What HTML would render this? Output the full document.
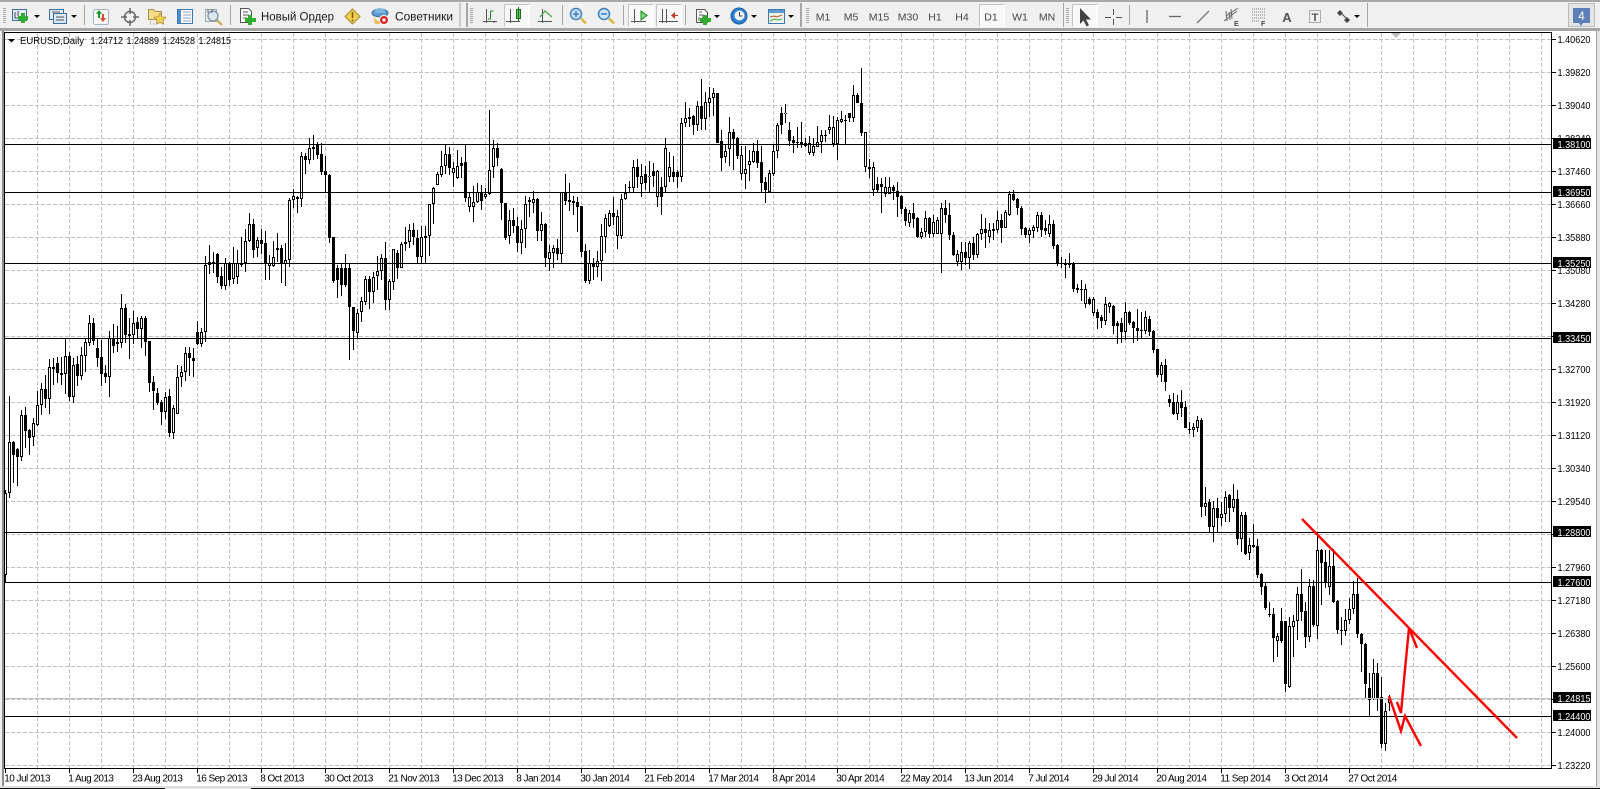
<!DOCTYPE html>
<html lang="ru"><head><meta charset="utf-8"><title>EURUSD,Daily</title>
<style>html,body{margin:0;padding:0;background:#fff;overflow:hidden}svg{display:block}text{font-family:"Liberation Sans","Noto Sans CJK SC",sans-serif}</style></head>
<body>
<svg xmlns="http://www.w3.org/2000/svg" width="1600" height="789" viewBox="0 0 1600 789">
<rect width="1600" height="789" fill="#fff"/>
<!-- toolbar -->
<rect width="1600" height="31" fill="#f0f0f0"/>
<rect width="1600" height="2" fill="#a8a8a8"/>
<rect y="28" width="1600" height="3" fill="#a5a5a5"/>
<rect x="0" y="31" width="4" height="758" fill="#f0f0f0"/>
<rect x="2" y="31" width="2" height="758" fill="#8c8c8c"/>
<rect x="1597" y="31" width="3" height="758" fill="#e4e4e4"/>
<rect x="1596" y="31" width="1" height="758" fill="#a0a0a0"/>
<rect y="786" width="1600" height="3" fill="#e0e0e0"/>
<path d="M0 788.5H165M251 788.5H1600" stroke="#111" stroke-width="1"/>
<!-- grips and separators -->
<g fill="none" stroke="#a8a8a8" stroke-dasharray="1 1" stroke-width="3"><path d="M4.500 8V24M471.500 8V24M807.500 8V24M1067.500 8V24"/></g>
<g stroke="#a6a6a6" fill="none"><path d="M84.500 5V25M230.500 5V25M562.500 5V25M623.500 5V25M685.500 5V25M1063.500 3V27M1129.500 5V25M1367.500 3V27M460 3V27"/></g>
<path d="M467 3V27M801 3V27" stroke="#a6a6a6" stroke-width="2"/>
<!-- pressed buttons -->
<g fill="#f9f9f9" stroke="#c4c4c4"><rect x="504.500" y="4.500" width="25" height="22"/><rect x="628.500" y="4.500" width="25" height="22"/><rect x="656.500" y="4.500" width="25" height="22"/><rect x="979.500" y="4.500" width="25" height="22"/><rect x="1072.500" y="4.500" width="25" height="22"/></g>
<g fill="none" stroke="#fff"><path d="M529.500 4.500V26.500H504.500M653.500 4.500V26.500H628.500M681.500 4.500V26.500H656.500M1004.500 4.500V26.500H979.500M1097.500 4.500V26.500H1072.500"/></g>
<!-- dropdown arrows -->
<path d="M34 15h6l-3 3zM71 15h6l-3 3zM714 15h6l-3 3zM751 15h6l-3 3zM788 15h6l-3 3zM1354 15h6l-3 3z" fill="#111"/>
<!-- new chart -->
<rect x="12.500" y="9.500" width="14" height="11" fill="#e4eef8" stroke="#3b6ea5"/><path d="M15 12v6h9M18 11v5" stroke="#444" fill="none"/>
<path d="M23 13v10M18 18h10" stroke="#2fae2f" stroke-width="4"/>
<!-- profiles -->
<rect x="49.500" y="9.500" width="14" height="10" fill="#e4eef8" stroke="#3b6ea5"/><rect x="53.500" y="13.500" width="13" height="10" fill="#dce8f5" stroke="#3b6ea5"/><path d="M52 12h8M56 17h8M56 20h8" stroke="#555" fill="none"/>
<!-- market watch -->
<rect x="93.500" y="9.500" width="15" height="15" rx="2" fill="#f8f8f8" stroke="#9fb2c6"/><path d="M99 10l-3 4h2v4h2v-4h2z" fill="#1c9a2c"/><path d="M103 22l3-4h-2v-4h-2v4h-2z" fill="#d44a2a"/>
<!-- navigator -->
<circle cx="130" cy="17" r="5.500" fill="none" stroke="#666" stroke-width="1.500"/><path d="M130 8v6M130 20v6M121 17h6M133 17h6" stroke="#666" stroke-width="1.500"/>
<!-- folder star -->
<path d="M148.500 9.500h5l2 2h6v8h-13z" fill="#f6dd8a" stroke="#a89048"/><path d="M160 13l1.800 3.700 4.200.6-3 2.900.7 4.100-3.700-1.900-3.700 1.900.7-4.100-3-2.900 4.200-.6z" fill="#f0cf50" stroke="#a88a30" stroke-width=".7"/>
<path d="M150 22h1M150 24h1M153 24h1" stroke="#888"/>
<!-- terminal -->
<rect x="177.500" y="9.500" width="15" height="14" fill="#fff" stroke="#3b78b5"/><rect x="178" y="10" width="3" height="13" fill="#4a8ccc"/><path d="M183 12h8M183 15h8M183 18h8M183 21h8" stroke="#8aa0b8"/>
<!-- tester -->
<rect x="205.500" y="9.500" width="11" height="12" fill="#e8eef4" stroke="#9aa8b4"/><circle cx="213" cy="16" r="5" fill="#dbe8f2" stroke="#7e8e9c" stroke-width="1.300"/><path d="M217 20l5 5" stroke="#c8a848" stroke-width="2"/><path d="M208 9v4M212 9v4" stroke="#667"/>
<!-- new order -->
<path d="M240.500 8.500h8l3 3v11h-11z" fill="#fff" stroke="#555"/><path d="M243 12h5M243 15h6M243 18h4" stroke="#555"/><path d="M250 15v10M245 20h11" stroke="#2fae2f" stroke-width="4"/>
<text x="261" y="20.500" font-size="11.500" fill="#1a1a1a" textLength="73" lengthAdjust="spacingAndGlyphs">Новый Ордер</text>
<!-- alert -->
<path d="M352.500 9l7.500 7.500-7.500 7.500-7.500-7.500z" fill="#f6cf4e" stroke="#a88a30"/><path d="M352.500 12v6M352.500 19.500v2" stroke="#7a5a10" stroke-width="1.600"/>
<!-- advisors -->
<ellipse cx="380" cy="13" rx="8" ry="4" fill="#5a9ad0" stroke="#3a70a0"/><path d="M375 10q5-4 10 0v3h-10z" fill="#7fb6e0"/><path d="M373 16q6 9 13 3v5h-11z" fill="#f0c060"/><circle cx="384" cy="20" r="4.500" fill="#d82020" stroke="#fff"/><rect x="382.500" y="18.500" width="3" height="3" fill="#fff"/>
<text x="395" y="20.500" font-size="11.500" fill="#1a1a1a" textLength="58" lengthAdjust="spacingAndGlyphs">Советники</text>
<!-- chart type icons -->
<g fill="none" stroke="#555"><path d="M486.500 9v14M483 21.500h14M494 23v-1"/><path d="M510.500 9v14M506 21.500h14"/><path d="M542.500 9v14M538 21.500h14"/><path d="M634.500 9v14M631 21.500h15"/><path d="M662.500 9v14M666.500 9v14M659 21.500h19"/></g>
<path d="M490.500 11v8M490.500 11h3M488 19h3" stroke="#1c8a1c" fill="none"/>
<rect x="516.500" y="9.500" width="4" height="9" fill="#5fd05f" stroke="#1c6a1c"/><path d="M518.500 7v14" stroke="#1c6a1c"/>
<path d="M540 17l5-6 7 6" fill="none" stroke="#4aa84a" stroke-width="1.300"/>
<path d="M641 11l6 4.500-6 4.500z" fill="#7fd07f" stroke="#1c8a1c"/>
<path d="M675 12l-4 3.500 4 3.500z" fill="#c43a1a"/><path d="M675 15.500h3" stroke="#c43a1a"/>
<!-- zoom -->
<circle cx="576" cy="14" r="5.500" fill="#cfe4f6" stroke="#3c82c0" stroke-width="1.500"/><path d="M573 14h6M576 11v6" stroke="#3c82c0" stroke-width="1.500"/><path d="M581 18.500l5 5" stroke="#d8b840" stroke-width="2.500"/>
<circle cx="604" cy="14" r="5.500" fill="#cfe4f6" stroke="#3c82c0" stroke-width="1.500"/><path d="M601 14h6" stroke="#3c82c0" stroke-width="1.500"/><path d="M609 18.500l5 5" stroke="#d8b840" stroke-width="2.500"/>
<!-- indicators -->
<path d="M696.500 9.500h8l3 3v10h-11z" fill="#fff" stroke="#555"/><path d="M699 12h3M699 15h4v4M699 17v4" stroke="#555" fill="none"/><path d="M705 15v10M700 20h11" stroke="#2fae2f" stroke-width="4"/>
<!-- clock -->
<circle cx="739" cy="16" r="8" fill="#2f7fd0" stroke="#1c5a9c"/><circle cx="739.500" cy="15.500" r="5" fill="#eef2f6"/><path d="M739.500 12v4h3" stroke="#444" fill="none"/>
<!-- template -->
<rect x="768.500" y="9.500" width="16" height="14" fill="#eef4e8" stroke="#3c78b0"/><rect x="769" y="10" width="15" height="3" fill="#5a9ad0"/><path d="M770 17l4-1 3 1 5-2" stroke="#c05030" fill="none"/><path d="M770 21l4-2 3 1 5-1" stroke="#3ca83c" fill="none"/>
<!-- timeframes -->
<g font-size="10.500" fill="#444" text-anchor="middle"><text x="823" y="20.500">M1</text><text x="851" y="20.500">M5</text><text x="879" y="20.500">M15</text><text x="908" y="20.500">M30</text><text x="935" y="20.500">H1</text><text x="962" y="20.500">H4</text><text x="991" y="20.500">D1</text><text x="1020" y="20.500">W1</text><text x="1047" y="20.500">MN</text></g>
<!-- drawing tools -->
<path d="M1080 8v16l3.500-3.500 3 6 2.500-1.200-3-5.800h5z" fill="#444"/>
<path d="M1113.500 9v6M1113.500 19v6M1105 17.500h6M1116 17.500h6" stroke="#555" fill="none"/>
<path d="M1147 10v13" stroke="#666" stroke-width="1.300"/><path d="M1169 16.500h12" stroke="#666" stroke-width="1.300"/><path d="M1197 23l12-12" stroke="#777" stroke-width="1.300"/>
<path d="M1224 21l13-10M1226 16l12-8M1226 11l1 10M1231 9l1 10M1229 12l1 8" stroke="#666" fill="none"/><text x="1234" y="26" font-size="7" font-weight="bold" fill="#444">E</text>
<path d="M1252 9h13M1252 12h13M1252 15h13M1252 18h13M1252 21h8" stroke="#777" stroke-dasharray="1 1"/><text x="1261" y="26" font-size="7" font-weight="bold" fill="#444">F</text>
<text x="1287" y="22" font-size="13" font-weight="bold" fill="#555" text-anchor="middle">A</text>
<rect x="1309.500" y="10.500" width="11" height="12" fill="none" stroke="#666" stroke-dasharray="1 1"/><text x="1315" y="21" font-size="11" font-weight="bold" fill="#555" text-anchor="middle">T</text>
<path d="M1340 10l3 3-3 3-3-3zM1347 17l3 3-3 3-3-3z" fill="#444"/><path d="M1342 14l4 4" stroke="#444"/>
<!-- notification button -->
<rect x="1568.500" y="3.500" width="26" height="23" fill="#e4e4e4" stroke="#bcbcbc"/>
<path d="M1573 8h17v15h-7l-2 3-2-3h-6z" fill="#5c7fb8"/><text x="1581.500" y="20" font-size="11.500" fill="#fff" text-anchor="middle">4</text>
<!-- grid -->
<g fill="none" stroke="#c0c0c0" stroke-dasharray="4 2">
<path d="M5 39.500H1551M5 72.500H1551M5 105.500H1551M5 138.500H1551M5 171.500H1551M5 204.500H1551M5 237.500H1551M5 270.500H1551M5 303.500H1551M5 336.500H1551M5 369.500H1551M5 402.500H1551M5 435.500H1551M5 468.500H1551M5 501.500H1551M5 534.500H1551M5 567.500H1551M5 600.500H1551M5 633.500H1551M5 666.500H1551M5 699.500H1551M5 732.500H1551M5 765.500H1551"/>
<path d="M37.500 33V768M69.500 33V768M101.500 33V768M133.500 33V768M165.500 33V768M197.500 33V768M229.500 33V768M261.500 33V768M293.500 33V768M325.500 33V768M357.500 33V768M389.500 33V768M421.500 33V768M453.500 33V768M485.500 33V768M517.500 33V768M549.500 33V768M581.500 33V768M613.500 33V768M645.500 33V768M677.500 33V768M709.500 33V768M741.500 33V768M773.500 33V768M805.500 33V768M837.500 33V768M869.500 33V768M901.500 33V768M933.500 33V768M965.500 33V768M997.500 33V768M1029.500 33V768M1061.500 33V768M1093.500 33V768M1125.500 33V768M1157.500 33V768M1189.500 33V768M1221.500 33V768M1253.500 33V768M1285.500 33V768M1317.500 33V768M1349.500 33V768M1381.500 33V768M1413.500 33V768M1445.500 33V768M1477.500 33V768M1509.500 33V768M1541.500 33V768"/>
</g>
<!-- wicks -->
<path fill="none" stroke="#000" stroke-width="1" d="M5.500 490V582M9.500 396V498M13.500 441V483M17.500 448V486M21.500 410V461M25.500 407V448M29.500 429V455M33.500 418V446M37.500 391V426M41.500 383V415M45.500 375V408M49.500 359V414M53.500 358V385M57.500 357V383M61.500 357V385M65.500 338V394M69.500 352V401M73.500 358V403M77.500 356V386M81.500 347V380M85.500 338V372M89.500 315V346M93.500 318V345M97.500 338V367M101.500 340V386M105.500 365V383M109.500 331V397M113.500 324V353M117.500 326V352M121.500 294V348M125.500 304V343M129.500 318V359M133.500 311V344M137.500 317V338M141.500 316V348M145.500 316V356M149.500 341V392M153.500 376V410M157.500 388V405M161.500 400V425M165.500 392V419M169.500 389V437M173.500 405V439M177.500 365V414M181.500 366V387M185.500 347V381M189.500 347V376M193.500 348V377M197.500 321V345M201.500 328V347M205.500 256V342M209.500 245V274M213.500 252V273M217.500 253V283M221.500 267V289M225.500 258V290M229.500 262V286M233.500 247V284M237.500 250V284M241.500 237V267M245.500 229V272M249.500 213V242M253.500 219V258M257.500 237V257M261.500 229V254M265.500 231V280M269.500 255V280M273.500 241V267M277.500 233V262M281.500 245V283M285.500 243V286M289.500 198V267M293.500 189V208M297.500 196V213M301.500 152V207M305.500 153V174M309.500 138V164M313.500 135V160M317.500 142V159M321.500 143V175M325.500 156V192M329.500 174V243M333.500 237V283M337.500 265V298M341.500 264V296M345.500 254V287M349.500 263V360M353.500 307V350M357.500 309V338M361.500 297V322M365.500 276V305M369.500 276V309M373.500 272V303M377.500 256V290M381.500 254V280M385.500 242V310M389.500 279V310M393.500 249V290M397.500 250V279M401.500 242V268M405.500 227V251M409.500 224V248M413.500 223V245M417.500 230V263M421.500 226V263M425.500 226V263M429.500 204V256M433.500 187V224M437.500 172V185M441.500 151V177M445.500 145V174M449.500 147V175M453.500 162V187M457.500 150V179M461.500 157V178M465.500 145V202M469.500 193V212M473.500 186V222M477.500 183V203M481.500 185V210M485.500 188V199M489.500 110V195M493.500 140V178M497.500 143V166M501.500 168V220M505.500 203V240M509.500 210V244M513.500 208V233M517.500 217V252M521.500 220V254M525.500 196V248M529.500 197V217M533.500 191V213M537.500 198V241M541.500 212V241M545.500 223V267M549.500 245V271M553.500 245V268M557.500 239V260M561.500 192V263M565.500 174V205M569.500 183V211M573.500 196V215M577.500 197V232M581.500 206V257M585.500 244V283M589.500 250V284M593.500 258V280M597.500 251V277M601.500 224V281M605.500 214V253M609.500 210V227M613.500 197V225M617.500 210V249M621.500 194V239M625.500 184V200M629.500 181V192M633.500 160V192M637.500 159V188M641.500 164V197M645.500 166V190M649.500 161V192M653.500 163V187M657.500 170V207M661.500 177V215M665.500 138V193M669.500 152V182M673.500 156V182M677.500 170V188M681.500 118V182M685.500 102V127M689.500 108V127M693.500 115V135M697.500 101V131M701.500 79V130M705.500 92V130M709.500 87V117M713.500 88V116M717.500 93V143M721.500 130V171M725.500 145V163M729.500 117V166M733.500 129V170M737.500 137V159M741.500 146V180M745.500 146V189M749.500 150V181M753.500 143V163M757.500 140V168M761.500 146V193M765.500 177V203M769.500 170V192M773.500 145V176M777.500 123V158M781.500 107V134M785.500 104V123M789.500 122V146M793.500 136V153M797.500 127V148M801.500 122V148M805.500 138V147M809.500 136V155M813.500 138V156M817.500 126V147M821.500 130V153M825.500 130V142M829.500 115V134M833.500 116V147M837.500 117V160M841.500 111V123M845.500 115V144M849.500 113V122M853.500 85V122M857.500 93V103M861.500 68V136M865.500 132V172M869.500 159V178M873.500 162V196M877.500 177V193M881.500 178V213M885.500 177V197M889.500 177V194M893.500 185V200M897.500 182V217M901.500 195V214M905.500 207V226M909.500 210V227M913.500 203V228M917.500 217V238M921.500 228V239M925.500 211V237M929.500 217V238M933.500 215V237M937.500 217V234M941.500 203V273M945.500 200V223M949.500 203V240M953.500 232V256M957.500 250V266M961.500 242V270M965.500 242V265M969.500 241V269M973.500 237V260M977.500 233V258M981.500 214V240M985.500 218V248M989.500 223V243M993.500 223V240M997.500 211V233M1001.500 214V243M1005.500 210V228M1009.500 191V216M1013.500 190V201M1017.500 198V215M1021.500 206V235M1025.500 227V238M1029.500 228V243M1033.500 225V238M1037.500 212V232M1041.500 212V237M1045.500 220V235M1049.500 215V237M1053.500 220V249M1057.500 244V266M1061.500 257V268M1065.500 259V278M1069.500 253V268M1073.500 262V292M1077.500 284V293M1081.500 280V301M1085.500 284V308M1089.500 297V305M1093.500 297V316M1097.500 309V329M1101.500 315V328M1105.500 297V325M1109.500 302V313M1113.500 305V334M1117.500 321V344M1121.500 318V343M1125.500 302V340M1129.500 311V325M1133.500 321V343M1137.500 309V341M1141.500 312V338M1145.500 311V334M1149.500 316V336M1153.500 330V353M1157.500 349V377M1161.500 362V382M1165.500 359V391M1169.500 395V407M1173.500 393V415M1177.500 395V420M1181.500 390V417M1185.500 401V428M1189.500 422V434M1193.500 423V437M1197.500 416V432M1201.500 418V517M1205.500 487V516M1209.500 499V532M1213.500 501V542M1217.500 498V533M1221.500 502V526M1225.500 491V522M1229.500 494V522M1233.500 484V512M1237.500 490V545M1241.500 512V552M1245.500 512V555M1249.500 538V560M1253.500 524V548M1257.500 539V578M1261.500 573V595M1265.500 583V610M1269.500 602V617M1273.500 608V662M1277.500 633V657M1281.500 608V643M1285.500 621V692M1289.500 617V688M1293.500 615V657M1297.500 587V640M1301.500 569V621M1305.500 602V648M1309.500 579V642M1313.500 580V627M1317.500 532V639M1321.500 549V605M1325.500 550V588M1329.500 550V595M1333.500 549V603M1337.500 600V634M1341.500 617V645M1345.500 609V636M1349.500 598V624M1353.500 581V614M1357.500 578V638M1361.500 633V672M1365.500 643V698M1369.500 673V716M1373.500 659V700M1377.500 663V711M1381.500 677V748M1385.500 703V751M1389.500 695V711"/>
<!-- bodies -->
<path fill="none" stroke="#000" stroke-width="3" d="M5.500 493V575M9.500 442V493M13.500 442V455M17.500 449V457M21.500 415V457M25.500 415V431M29.500 430V438M33.500 423V437M37.500 405V425M41.500 389V405M45.500 389V399M49.500 367V399M53.500 367V369M57.500 363V373M61.500 373V375M65.500 356V374M69.500 356V397M73.500 365V397M77.500 364V376M81.500 355V376M85.500 342V356M89.500 323V343M93.500 323V341M97.500 348V358M101.500 357V374M105.500 373V377M109.500 338V377M113.500 338V346M117.500 342V344M121.500 308V343M125.500 308V335M129.500 334V336M133.500 323V335M137.500 322V329M141.500 318V329M145.500 318V342M149.500 341V383M153.500 382V391M157.500 393V403M161.500 402V412M165.500 397V412M169.500 396V433M173.500 408V433M177.500 377V414M181.500 372V377M185.500 353V372M189.500 353V358M193.500 358V361M197.500 332V344M201.500 332V344M205.500 265V332M209.500 262V265M213.500 262V264M217.500 254V277M221.500 276V286M225.500 263V286M229.500 263V280M233.500 263V279M237.500 263V277M241.500 263V265M245.500 241V263M249.500 224V241M253.500 224V250M257.500 240V248M261.500 240V244M265.500 243V264M269.500 263V266M273.500 257V266M277.500 248V250M281.500 248V264M285.500 260V264M289.500 200V260M293.500 196V200M297.500 197V199M301.500 156V199M305.500 156V160M309.500 148V160M313.500 147V149M317.500 144V155M321.500 154V172M325.500 171V175M329.500 175V238M333.500 237V281M337.500 268V280M341.500 268V285M345.500 268V285M349.500 268V307M353.500 307V331M357.500 313V333M361.500 301V312M365.500 279V302M369.500 279V292M373.500 277V292M377.500 271V276M381.500 258V271M385.500 258V300M389.500 281V300M393.500 249V282M397.500 253V268M401.500 244V268M405.500 242V244M409.500 230V242M413.500 230V237M417.500 238V257M421.500 237V257M425.500 236V238M429.500 204V236M433.500 188V204M437.500 174V185M441.500 166V175M445.500 154V166M449.500 154V168M453.500 168V173M457.500 166V178M461.500 163V166M465.500 162V198M469.500 197V207M473.500 202V207M477.500 192V202M481.500 193V201M485.500 194V197M489.500 170V194M493.500 148V167M497.500 148V158M501.500 169V203M505.500 203V238M509.500 220V236M513.500 220V226M517.500 226V243M521.500 229V243M525.500 204V229M529.500 200V202M533.500 199V203M537.500 199V231M541.500 224V231M545.500 224V258M549.500 252V259M553.500 248V253M557.500 248V254M561.500 192V254M565.500 192V201M569.500 200V202M573.500 201V203M577.500 202V207M581.500 206V252M585.500 251V281M589.500 263V281M593.500 264V267M597.500 261V267M601.500 236V261M605.500 218V237M609.500 213V226M613.500 213V217M617.500 216V236M621.500 199V236M625.500 193V199M629.500 187V188M633.500 167V188M637.500 167V177M641.500 176V184M645.500 174V183M649.500 176V177M653.500 171V176M657.500 171V197M661.500 187V197M665.500 148V187M669.500 167V177M673.500 172V177M677.500 172V177M681.500 123V177M685.500 118V123M689.500 117V119M693.500 116V125M697.500 106V125M701.500 106V119M705.500 102V119M709.500 98V103M713.500 93V98M717.500 93V143M721.500 141V158M725.500 151V157M729.500 132V149M733.500 132V139M737.500 138V156M741.500 155V174M745.500 169V174M749.500 161V165M753.500 151V162M757.500 151V163M761.500 162V183M765.500 182V190M769.500 173V192M773.500 151V174M777.500 125V151M781.500 113V125M785.500 113V114M789.500 130V141M793.500 140V143M797.500 142V143M801.500 142V144M805.500 143V146M809.500 143V153M813.500 146V153M817.500 142V147M821.500 135V142M825.500 135V136M829.500 127V130M833.500 127V144M837.500 120V144M841.500 119V122M845.500 120V121M849.500 113V118M853.500 95V118M857.500 95V103M861.500 103V133M865.500 132V167M869.500 167V169M873.500 167V190M877.500 184V190M881.500 184V187M885.500 187V194M889.500 187V194M893.500 187V191M897.500 191V197M901.500 196V209M905.500 209V221M909.500 213V223M913.500 213V219M917.500 218V237M921.500 232V237M925.500 218V232M929.500 218V234M933.500 222V234M937.500 220V234M941.500 208V234M945.500 208V215M949.500 215V235M953.500 235V255M957.500 254V262M961.500 252V262M965.500 252V258M969.500 243V258M973.500 243V255M977.500 234V255M981.500 229V234M985.500 229V233M989.500 230V237M993.500 229V231M997.500 220V230M1001.500 220V228M1005.500 212V228M1009.500 194V215M1013.500 194V200M1017.500 199V208M1021.500 208V229M1025.500 228V235M1029.500 230V235M1033.500 227V231M1037.500 215V228M1041.500 215V230M1045.500 228V231M1049.500 224V234M1053.500 224V246M1057.500 245V263M1061.500 263V264M1065.500 264V265M1069.500 263V265M1073.500 263V289M1077.500 288V290M1081.500 289V290M1085.500 289V304M1089.500 299V304M1093.500 299V313M1097.500 312V318M1101.500 317V321M1105.500 304V321M1109.500 303V307M1113.500 306V326M1117.500 323V326M1121.500 323V332M1125.500 312V332M1129.500 312V323M1133.500 322V328M1137.500 328V331M1141.500 330V331M1145.500 317V331M1149.500 319V332M1153.500 331V350M1157.500 349V375M1161.500 365V375M1165.500 365V382M1169.500 399V403M1173.500 402V414M1177.500 402V414M1181.500 402V408M1185.500 407V428M1189.500 429V430M1193.500 427V430M1197.500 420V428M1201.500 420V507M1205.500 503V507M1209.500 502V527M1213.500 508V527M1217.500 508V518M1221.500 514V518M1225.500 497V514M1229.500 495V508M1233.500 499V508M1237.500 499V539M1241.500 515V539M1245.500 515V554M1249.500 545V553M1253.500 545V547M1257.500 546V575M1261.500 574V587M1265.500 586V608M1269.500 614V615M1273.500 614V638M1277.500 636V641M1281.500 621V641M1285.500 621V684M1289.500 626V687M1293.500 621V627M1297.500 594V621M1301.500 594V612M1305.500 611V637M1309.500 586V637M1313.500 586V625M1317.500 550V626M1321.500 550V563M1325.500 562V582M1329.500 566V587M1333.500 566V602M1337.500 601V630M1341.500 630V631M1345.500 620V631M1349.500 609V620M1353.500 594V609M1357.500 594V634M1361.500 634V644M1365.500 644V684M1369.500 688V700M1373.500 673V699M1377.500 673V698M1381.500 697V744M1385.500 711V744M1389.500 699V703"/>
<!-- white interiors -->
<path fill="none" stroke="#fff" stroke-width="1" d="M5.500 494V574M9.500 443V492M21.500 416V456M33.500 424V436M37.500 406V424M41.500 390V404M49.500 368V398M65.500 357V373M73.500 366V396M81.500 356V375M85.500 343V355M89.500 324V342M109.500 339V376M121.500 309V342M133.500 324V334M141.500 319V328M165.500 398V411M173.500 409V432M177.500 378V413M181.500 373V376M185.500 354V371M201.500 333V343M205.500 266V331M209.500 263V264M225.500 264V285M233.500 264V278M237.500 264V276M245.500 242V262M249.500 225V240M257.500 241V247M269.500 264V265M273.500 258V265M285.500 261V263M289.500 201V259M293.500 197V199M301.500 157V198M309.500 149V159M357.500 314V332M361.500 302V311M365.500 280V301M373.500 278V291M377.500 272V275M381.500 259V270M389.500 282V299M393.500 250V281M401.500 245V267M405.500 243V243M409.500 231V241M421.500 238V256M425.500 237V237M429.500 205V235M433.500 189V203M437.500 175V184M441.500 167V174M445.500 155V165M453.500 169V172M457.500 167V177M469.500 198V206M473.500 203V206M477.500 193V201M485.500 195V196M489.500 171V193M493.500 149V166M509.500 221V235M521.500 230V242M525.500 205V228M533.500 200V202M541.500 225V230M549.500 253V258M553.500 249V252M561.500 193V253M589.500 264V280M597.500 262V266M601.500 237V260M605.500 219V236M609.500 214V225M617.500 217V235M621.500 200V235M625.500 194V198M633.500 168V187M641.500 177V183M649.500 177V176M657.500 172V196M665.500 149V186M669.500 168V176M681.500 124V176M685.500 119V122M689.500 118V118M697.500 107V124M705.500 103V118M709.500 99V102M713.500 94V97M725.500 152V156M729.500 133V148M741.500 156V173M745.500 170V173M749.500 162V164M753.500 152V161M769.500 174V191M773.500 152V173M777.500 126V150M785.500 114V113M809.500 144V152M813.500 147V152M817.500 143V146M821.500 136V141M829.500 128V129M833.500 128V143M837.500 121V143M841.500 120V121M853.500 96V117M865.500 133V166M873.500 168V189M885.500 188V193M889.500 188V193M909.500 214V222M921.500 233V236M925.500 219V231M933.500 223V233M937.500 221V233M941.500 209V233M957.500 255V261M961.500 253V261M969.500 244V257M977.500 235V254M981.500 230V233M989.500 231V236M993.500 230V230M997.500 221V229M1005.500 213V227M1009.500 195V214M1029.500 231V234M1033.500 228V230M1037.500 216V227M1049.500 225V233M1085.500 290V303M1093.500 300V312M1105.500 305V320M1109.500 304V306M1125.500 313V331M1145.500 318V330M1161.500 366V374M1177.500 403V413M1193.500 428V429M1197.500 421V427M1205.500 504V506M1213.500 509V526M1221.500 515V517M1225.500 498V513M1233.500 500V507M1241.500 516V538M1249.500 546V552M1277.500 637V640M1289.500 627V686M1293.500 622V626M1297.500 595V620M1309.500 587V636M1317.500 551V625M1329.500 567V586M1345.500 621V630M1349.500 610V619M1353.500 595V608M1373.500 674V698M1385.500 712V743M1389.500 700V702"/>
<!-- horizontal lines -->
<path d="M5 698.500H1551" stroke="#c0c0c0"/>
<path d="M5 144.500H1551M5 192.500H1551M5 263.500H1551M5 338.500H1551M5 532.500H1551M5 582.500H1551M5 716.500H1551" stroke="#000"/>
<!-- red objects -->
<g fill="none" stroke="#f00" stroke-width="2.400"><path d="M1302 519L1517 738"/><path d="M1389 696L1401 731L1405 716L1421 746"/><path d="M1397 702L1401 713L1404 680L1409 628L1417 648"/></g>
<!-- frame -->
<path d="M4.500 32.500H1551.500V768.500H4.500Z" fill="none" stroke="#000"/>
<path d="M1391 33h10l-5 5z" fill="#bdbdbd"/>
<!-- header -->
<path d="M8 39h7l-3.500 3.500z" fill="#000"/>
<g font-size="10.500" fill="#000"><text x="20" y="44" textLength="64" lengthAdjust="spacingAndGlyphs">EURUSD,Daily</text><text x="90.500" y="44" textLength="32.500" lengthAdjust="spacingAndGlyphs">1.24712</text><text x="126.500" y="44" textLength="32.500" lengthAdjust="spacingAndGlyphs">1.24889</text><text x="162.500" y="44" textLength="32.500" lengthAdjust="spacingAndGlyphs">1.24528</text><text x="198.500" y="44" textLength="32.500" lengthAdjust="spacingAndGlyphs">1.24815</text></g>
<!-- axis ticks -->
<path stroke="#000" fill="none" d="M1552 39.500h4M1552 72.500h4M1552 105.500h4M1552 138.500h4M1552 171.500h4M1552 204.500h4M1552 237.500h4M1552 270.500h4M1552 303.500h4M1552 336.500h4M1552 369.500h4M1552 402.500h4M1552 435.500h4M1552 468.500h4M1552 501.500h4M1552 534.500h4M1552 567.500h4M1552 600.500h4M1552 633.500h4M1552 666.500h4M1552 699.500h4M1552 732.500h4M1552 765.500h4M5.500 769v4M69.500 769v4M133.500 769v4M197.500 769v4M261.500 769v4M325.500 769v4M389.500 769v4M453.500 769v4M517.500 769v4M581.500 769v4M645.500 769v4M709.500 769v4M773.500 769v4M837.500 769v4M901.500 769v4M965.500 769v4M1029.500 769v4M1093.500 769v4M1157.500 769v4M1221.500 769v4M1285.500 769v4M1349.500 769v4"/>
<!-- price labels -->
<g font-size="10.500" fill="#000">
<text x="1557.500" y="43" textLength="33" lengthAdjust="spacingAndGlyphs">1.40620</text><text x="1557.500" y="76" textLength="33" lengthAdjust="spacingAndGlyphs">1.39820</text><text x="1557.500" y="109" textLength="33" lengthAdjust="spacingAndGlyphs">1.39040</text><text x="1557.500" y="142" textLength="33" lengthAdjust="spacingAndGlyphs">1.38240</text><text x="1557.500" y="175" textLength="33" lengthAdjust="spacingAndGlyphs">1.37460</text><text x="1557.500" y="208" textLength="33" lengthAdjust="spacingAndGlyphs">1.36660</text><text x="1557.500" y="241" textLength="33" lengthAdjust="spacingAndGlyphs">1.35880</text><text x="1557.500" y="274" textLength="33" lengthAdjust="spacingAndGlyphs">1.35080</text><text x="1557.500" y="307" textLength="33" lengthAdjust="spacingAndGlyphs">1.34280</text><text x="1557.500" y="373" textLength="33" lengthAdjust="spacingAndGlyphs">1.32700</text><text x="1557.500" y="406" textLength="33" lengthAdjust="spacingAndGlyphs">1.31920</text><text x="1557.500" y="439" textLength="33" lengthAdjust="spacingAndGlyphs">1.31120</text><text x="1557.500" y="472" textLength="33" lengthAdjust="spacingAndGlyphs">1.30340</text><text x="1557.500" y="505" textLength="33" lengthAdjust="spacingAndGlyphs">1.29540</text><text x="1557.500" y="571" textLength="33" lengthAdjust="spacingAndGlyphs">1.27960</text><text x="1557.500" y="604" textLength="33" lengthAdjust="spacingAndGlyphs">1.27180</text><text x="1557.500" y="637" textLength="33" lengthAdjust="spacingAndGlyphs">1.26380</text><text x="1557.500" y="670" textLength="33" lengthAdjust="spacingAndGlyphs">1.25600</text><text x="1557.500" y="736" textLength="33" lengthAdjust="spacingAndGlyphs">1.24000</text><text x="1557.500" y="769" textLength="33" lengthAdjust="spacingAndGlyphs">1.23220</text>
</g>
<!-- level boxes -->
<g fill="#000"><rect x="1553" y="138" width="38" height="11"/><rect x="1553" y="186" width="38" height="11"/><rect x="1553" y="257" width="38" height="11"/><rect x="1553" y="332" width="38" height="11"/><rect x="1553" y="526" width="38" height="11"/><rect x="1553" y="576" width="38" height="11"/><rect x="1553" y="692" width="38" height="11"/><rect x="1553" y="710" width="38" height="11"/></g>
<g font-size="10.500" fill="#fff">
<text x="1557.500" y="148" textLength="33" lengthAdjust="spacingAndGlyphs">1.38100</text><text x="1557.500" y="196" textLength="33" lengthAdjust="spacingAndGlyphs">1.36950</text><text x="1557.500" y="267" textLength="33" lengthAdjust="spacingAndGlyphs">1.35250</text><text x="1557.500" y="342" textLength="33" lengthAdjust="spacingAndGlyphs">1.33450</text><text x="1557.500" y="536" textLength="33" lengthAdjust="spacingAndGlyphs">1.28800</text><text x="1557.500" y="586" textLength="33" lengthAdjust="spacingAndGlyphs">1.27600</text><text x="1557.500" y="702" textLength="33" lengthAdjust="spacingAndGlyphs">1.24815</text><text x="1557.500" y="720" textLength="33" lengthAdjust="spacingAndGlyphs">1.24400</text>
</g>
<!-- date labels -->
<g font-size="10" fill="#000" letter-spacing="-.55" transform="translate(-.7 0)">
<text x="5" y="781.500">10 Jul 2013</text><text x="69" y="781.500">1 Aug 2013</text><text x="133" y="781.500">23 Aug 2013</text><text x="197" y="781.500">16 Sep 2013</text><text x="261" y="781.500">8 Oct 2013</text><text x="325" y="781.500">30 Oct 2013</text><text x="389" y="781.500">21 Nov 2013</text><text x="453" y="781.500">13 Dec 2013</text><text x="517" y="781.500">8 Jan 2014</text><text x="581" y="781.500">30 Jan 2014</text><text x="645" y="781.500">21 Feb 2014</text><text x="709" y="781.500">17 Mar 2014</text><text x="773" y="781.500">8 Apr 2014</text><text x="837" y="781.500">30 Apr 2014</text><text x="901" y="781.500">22 May 2014</text><text x="965" y="781.500">13 Jun 2014</text><text x="1029" y="781.500">7 Jul 2014</text><text x="1093" y="781.500">29 Jul 2014</text><text x="1157" y="781.500">20 Aug 2014</text><text x="1221" y="781.500">11 Sep 2014</text><text x="1285" y="781.500">3 Oct 2014</text><text x="1349" y="781.500">27 Oct 2014</text>
</g>
</svg>
</body></html>
